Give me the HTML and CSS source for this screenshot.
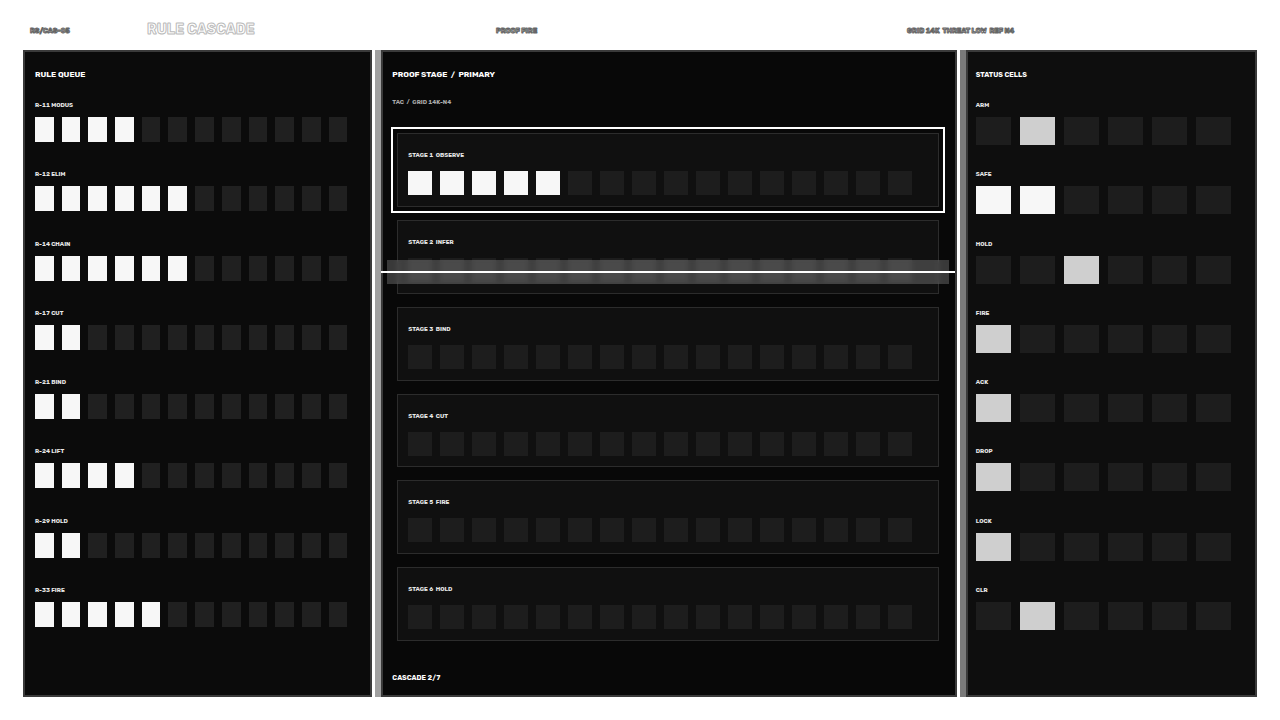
FILE: index.html
```
<!DOCTYPE html>
<html lang="en">
<head>
  <meta charset="utf-8" />
  <meta name="viewport" content="width=device-width,initial-scale=1" />
  <title>Rule Cascade</title>
  <link rel="stylesheet" href="styles.css">
</head>
<body>
  <header class="topbar">
    <span class="tag">RS/CAS-05</span>
    <h1>RULE CASCADE</h1>
    <span class="tag">PROOF FIRE</span>
    <span class="tag">GRID 14K&nbsp; THREAT LOW&nbsp; REF N4</span>
  </header>

  <main class="board">
    <section class="panel queue">
      <h2>RULE QUEUE</h2>
      <div class="rows" id="queue"></div>
    </section>

    <section class="panel proof">
      <h2>PROOF STAGE&nbsp; /&nbsp; PRIMARY</h2>
      <p class="sub">TAC&nbsp; /&nbsp; GRID 14K-N4</p>
      <div class="stages">
        <div class="stage-list" id="stages"></div>
        <div class="scan"></div>
      </div>
      <p class="foot">CASCADE 2/7</p>
    </section>

    <section class="panel status">
      <h2>STATUS CELLS</h2>
      <div class="rows" id="status"></div>
    </section>
  </main>

  <script src="board.js"></script>
</body>
</html>
```
FILE: styles.css
```
* { box-sizing: border-box; }
body {
  margin: 0;
  min-height: 100vh;
  display: flex; flex-direction: column;
  padding: 0 23px 23px;
  background: #fff; color: #fff;
  font-family: Rubik, Inter, "Liberation Sans", sans-serif;
  font-weight: 700;
  font-variant-numeric: tabular-nums;
}
h1, h2, h3, p { margin: 0; font-weight: 700; }

/* top bar */
.topbar {
  display: grid;
  grid-template-columns: 117fr 349fr 411fr 343fr;
  align-items: center;
  height: 50px;
  padding: 12px 7px 0;
}
.topbar h1 {
  font-size: 14px; line-height: 16px;
  padding-bottom: 3px;
  -webkit-text-stroke: 1px #bbb;
}
.tag {
  font-size: 7px; line-height: 12px;
  -webkit-text-stroke: 1px #666;
}

/* panels */
.board {
  flex: 1;
  display: grid;
  grid-template-columns: 349fr 581fr 297fr;
  gap: 3px;
}
.panel {
  display: flex; flex-direction: column;
  background: #0b0b0b;
  box-shadow: inset 0 0 0 2px #3a3a3a;
}
.panel h2 { font-size: 8px; line-height: 12px; }
.queue { padding: 19px 25px 44px 12px; }
.proof {
  padding: 19px 18px 13px 11px;
  background: #080808;
  border-left: 6px solid #a0a0a0;
}
.status {
  padding: 19px 26px 44px 10px;
  background: #0e0e0e;
  border-left: 6px solid #7a7a7a;
}
.status h2 { font-size: 7px; }

/* rule and status rows */
.rows { flex: 1; display: flex; flex-direction: column; padding-top: 18px; }
.row { flex: 1; }
.row h3, .stage h3 { font-size: 6px; line-height: 12px; color: #e8e8e8; }
.cells { display: grid; }
.cells i { background: #1d1d1d; }
.cells .on { background: #f7f7f7; }
.cells .dim { background: #cfcfcf; }
.queue .cells { grid-template-columns: repeat(12, 1fr); gap: 8px; margin-top: 6px; }
.queue .cells i { height: 25px; }
.queue .cells i:not(.on) { background: #202020; }
.status .cells { grid-template-columns: repeat(6, 1fr); gap: 9px; margin-top: 6px; }
.status .cells i { height: 28px; }

/* proof stages */
.sub { margin-top: 15px; font-size: 6px; line-height: 12px; color: #aaa; }
.stages { flex: 1; position: relative; margin: 25px 0 31px 5px; }
.stage-list { height: 100%; display: grid; grid-auto-rows: 1fr; gap: 13px; }
.stage {
  border: 1px solid #2c2c2c;
  background: #101010;
  padding: 15px 26px 10px 10px;
}
.stage.current { outline: 2px solid #fff; outline-offset: 4px; }
.stage .cells { grid-template-columns: repeat(16, 1fr); gap: 8px; margin-top: 10px; }
.stage .cells i { height: 24px; }
.foot { font-size: 7px; line-height: 12px; }

.scan {
  position: absolute; top: 25%; left: -10px; right: -10px;
  height: 24px;
  background: rgba(255,255,255,0.2);
  backdrop-filter: blur(2px);
}
.scan::after {
  content: "";
  position: absolute; top: 11px; left: -6px; right: -6px;
  height: 2px;
  background: #fff;
}
```
FILE: board.js
```
(function(){
  const queue = [
    ['R-11 MODUS', 4], ['R-12 ELIM', 6], ['R-14 CHAIN', 6], ['R-17 CUT', 2],
    ['R-21 BIND', 2], ['R-24 LIFT', 4], ['R-29 HOLD', 2], ['R-33 FIRE', 5]
  ];
  const stages = [
    ['OBSERVE', 5], ['INFER', 0], ['BIND', 0], ['CUT', 0], ['FIRE', 0], ['HOLD', 0]
  ];
  // one character per cell: # lit, + dim, . off
  const status = [
    ['ARM', '.+....'], ['SAFE', '##....'], ['HOLD', '..+...'], ['FIRE', '+.....'],
    ['ACK', '+.....'], ['DROP', '+.....'], ['LOCK', '+.....'], ['CLR', '.+....']
  ];

  const bar = (on, total) => '#'.repeat(on).padEnd(total, '.');

  function group(cls, label, pattern){
    const cells = [...pattern].map(c =>
      c === '#' ? '<i class="on"></i>' : c === '+' ? '<i class="dim"></i>' : '<i></i>'
    ).join('');
    return `<div class="${cls}"><h3>${label}</h3><div class="cells">${cells}</div></div>`;
  }

  document.getElementById('queue').innerHTML =
    queue.map(([name, on]) => group('row', name, bar(on, 12))).join('');
  document.getElementById('stages').innerHTML =
    stages.map(([name, on], i) =>
      group(i === 0 ? 'stage current' : 'stage', `STAGE ${i + 1}&nbsp; ${name}`, bar(on, 16))
    ).join('');
  document.getElementById('status').innerHTML =
    status.map(([name, cells]) => group('row', name, cells)).join('');
})();
```
